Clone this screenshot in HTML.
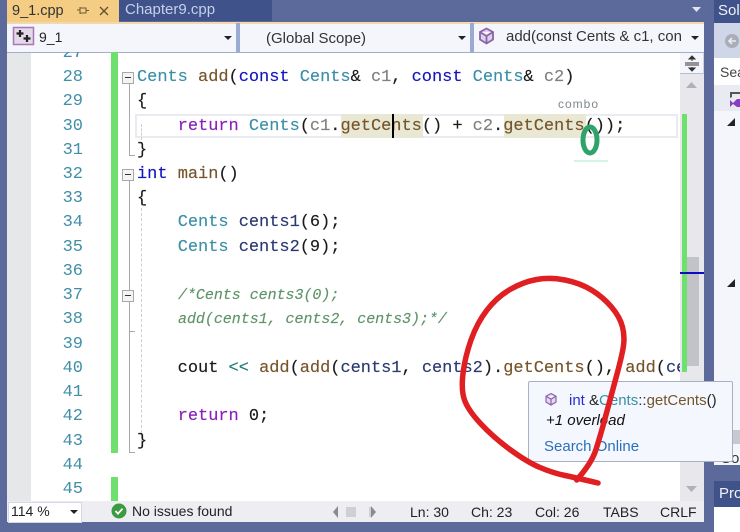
<!DOCTYPE html>
<html><head><meta charset="utf-8">
<style>
html,body{margin:0;padding:0;}
body{width:740px;height:532px;overflow:hidden;position:relative;background:#5b6a9a;font-family:"Liberation Sans","Noto Sans CJK KR",sans-serif;}
.a{position:absolute;}
.t{position:absolute;white-space:pre;}
#ed{position:absolute;left:0;top:52px;width:680px;height:449px;overflow:hidden;}
.c{position:absolute;left:137px;height:24px;font:17px/24px "Liberation Mono",monospace;letter-spacing:-.03px;white-space:pre;color:#1a1a1a;margin-top:2px;-webkit-text-stroke:.15px;}
.n{position:absolute;left:40px;width:43px;text-align:right;font:17px/24px "Liberation Mono",monospace;color:#3f8fa8;margin-top:2px;}
.ty{color:#3b8fa6}.kw{color:#1515c0}.rt{color:#8a20b8}.fn{color:#75552a}.pm{color:#808080}.lv{color:#2a3a70}.cm{color:#5f9468;font-style:italic}.op{color:#1f7a7a}
.fold{position:absolute;left:122px;width:10px;height:10px;border:1px solid #a8a8a8;background:#f4f4f4;}
.fold:after{content:"";position:absolute;left:2px;top:4px;width:6px;height:1px;background:#333;}
.vl{position:absolute;background:#a8a8a8;}
.ui{font-size:14px;color:#222;}
.u{font-size:15px;color:#222;}
</style></head><body>
<!-- tabs -->
<div class="a" style="left:7px;top:0;width:112px;height:22px;background:#f5cc84"></div>
<div class="t" style="left:12px;top:1px;font-size:14.5px;line-height:20px;color:#333">9_1.cpp</div>
<svg class="a" style="left:76px;top:4px" width="40" height="14"><path d="M1 6h3M4 3v7M4 4h6v5H4M10 6.500h3" stroke="#6a5a30" fill="none"/><path d="M24 3l8 8M32 3l-8 8" stroke="#5c5030" stroke-width="1.300" fill="none"/></svg>
<div class="a" style="left:119px;top:0;width:153px;height:21px;background:#3f5289"></div>
<div class="t" style="left:125px;top:0;font-size:15px;line-height:20px;color:#c6d0ec">Chapter9.cpp</div>
<svg class="a" style="left:692px;top:7px" width="10" height="6"><path d="M0 0h9l-4.500 5z" fill="#dfe4f0"/></svg>
<!-- nav bar -->
<div class="a" style="left:7px;top:22px;width:697px;height:2px;background:#f2d8ad"></div>
<div class="a" style="left:7px;top:24px;width:697px;height:28px;background:#f5f6fc"></div>
<div class="a" style="left:7px;top:52px;width:697px;height:1px;background:#a3aeca"></div>
<div class="a" style="left:236px;top:23px;width:4px;height:29px;background:#9aaad0"></div>
<div class="a" style="left:470px;top:23px;width:4px;height:29px;background:#9aaad0"></div>
<svg class="a" style="left:12px;top:26px" width="24" height="21"><rect x="1.500" y="1.500" width="20" height="17" fill="#e4d8ea" stroke="#a679b5" stroke-width="1.500"/><path d="M8 4v7M4.500 7.500h7M15 9v7M11.500 12.500h7" stroke="#222" stroke-width="2.200"/></svg>
<div class="t ui" style="left:39px;top:27px;line-height:20px">9_1</div>
<svg class="a" style="left:224px;top:36px" width="9" height="5"><path d="M0 0h8l-4 4z" fill="#222"/></svg>
<div class="t u" style="left:266px;top:29px;line-height:20px;color:#333">(Global Scope)</div>
<svg class="a" style="left:458px;top:36px" width="9" height="5"><path d="M0 0h8l-4 4z" fill="#222"/></svg>
<svg class="a" style="left:478px;top:27px" width="17" height="18"><path d="M8.500 1.500l6.500 3.500v7.500l-6.500 4-6.500-4V5zM2 5l6.500 4 6.500-4M8.500 9v8" fill="#ddd2ea" stroke="#8a63aa" stroke-width="1.800"/></svg>
<div class="t u" style="left:506px;top:27px;line-height:20px;color:#333">add(const Cents &amp; c1, con</div>
<svg class="a" style="left:691px;top:36px" width="9" height="5"><path d="M0 0h8l-4 4z" fill="#222"/></svg>
<!-- editor -->
<div class="a" style="left:7px;top:53px;width:24px;height:448px;background:#e6e7e8"></div>
<div class="a" style="left:31px;top:53px;width:649px;height:448px;background:#fff"></div>
<div id="ed">
<div class="a" style="left:111px;top:0;width:7px;height:401px;background:#6ee06e"></div>
<div class="a" style="left:111px;top:425px;width:7px;height:24px;background:#6ee06e"></div>
<div class="a" style="left:135px;top:62px;width:539px;height:20px;border:2px solid #eaeaf1"></div>
<div class="a" style="left:341px;top:62px;width:82px;height:24px;background:#e8e8d4"></div>
<div class="a" style="left:504px;top:62px;width:82px;height:24px;background:#e8e8d4"></div>
<div class="vl" style="left:129px;top:31px;width:1px;height:72px"></div>
<div class="vl" style="left:129px;top:103px;width:6px;height:1px"></div>
<div class="vl" style="left:129px;top:128px;width:1px;height:272px"></div>
<div class="vl" style="left:129px;top:400px;width:6px;height:1px"></div>
<div class="vl" style="left:129px;top:279px;width:6px;height:1px"></div>
<div class="a" style="left:141px;top:72px;width:0;height:16px;border-left:1px dashed #cfcfcf"></div>
<div class="a" style="left:141px;top:146px;width:0;height:250px;border-left:1px dashed #cfcfcf"></div>
<div class="fold" style="top:20px"></div>
<div class="fold" style="top:117px"></div>
<div class="fold" style="top:238px"></div>
<div class="n" style="top:-12px">27</div>
<div class="n" style="top:12px">28</div><div class="n" style="top:36px">29</div><div class="n" style="top:61px">30</div><div class="n" style="top:85px">31</div><div class="n" style="top:109px">32</div><div class="n" style="top:133px">33</div><div class="n" style="top:157px">34</div><div class="n" style="top:182px">35</div><div class="n" style="top:206px">36</div><div class="n" style="top:230px">37</div><div class="n" style="top:254px">38</div><div class="n" style="top:279px">39</div><div class="n" style="top:303px">40</div><div class="n" style="top:327px">41</div><div class="n" style="top:351px">42</div><div class="n" style="top:376px">43</div><div class="n" style="top:400px">44</div><div class="n" style="top:424px">45</div>
<div class="c" style="top:12px"><span class="ty">Cents</span> <span class="fn">add</span>(<span class="kw">const</span> <span class="ty">Cents</span>&amp; <span class="pm">c1</span>, <span class="kw">const</span> <span class="ty">Cents</span>&amp; <span class="pm">c2</span>)</div>
<div class="c" style="top:36px">{</div>
<div class="c" style="top:61px">    <span class="rt">return</span> <span class="ty">Cents</span>(<span class="pm">c1</span>.<span class="fn">getCents</span>() + <span class="pm">c2</span>.<span class="fn">getCents</span>());</div>
<div class="c" style="top:85px">}</div>
<div class="c" style="top:109px"><span class="kw">int</span> <span class="fn">main</span>()</div>
<div class="c" style="top:133px">{</div>
<div class="c" style="top:157px">    <span class="ty">Cents</span> <span class="lv">cents1</span>(6);</div>
<div class="c" style="top:182px">    <span class="ty">Cents</span> <span class="lv">cents2</span>(9);</div>
<div class="c" style="top:230px;left:178px;font-size:15px;letter-spacing:-.04px"><span class="cm">/*Cents cents3(0);</span></div>
<div class="c" style="top:254px;left:178px;font-size:15px;letter-spacing:-.04px"><span class="cm">add(cents1, cents2, cents3);*/</span></div>
<div class="c" style="top:303px">    cout <span class="op">&lt;&lt;</span> <span class="fn">add</span>(<span class="fn">add</span>(<span class="lv">cents1</span>, <span class="lv">cents2</span>).<span class="fn">getCents</span>(), <span class="fn">add</span>(<span class="lv">ce</span></div>
<div class="c" style="top:351px">    <span class="rt">return</span> 0;</div>
<div class="c" style="top:376px">}</div>
<div class="a" style="left:392px;top:62px;width:2px;height:24px;background:#000"></div>
</div>
<!-- annotation near line 30 -->
<div class="t" style="left:558px;top:98px;font-size:12px;line-height:13px;color:#7f888c;letter-spacing:1px">combo</div>
<svg class="a" style="left:572px;top:120px" width="38" height="44"><ellipse cx="18" cy="20" rx="7" ry="13" fill="none" stroke="#2ea36a" stroke-width="5"/><path d="M2 41h34" stroke="#a6ecc8" stroke-width="1"/></svg>
<!-- splitter + scrollbar -->
<div class="a" style="left:680px;top:53px;width:24px;height:448px;background:#e8e8ec"></div>
<div class="a" style="left:680px;top:53px;width:23px;height:20px;background:#f5f6fc;border-right:1px solid #cfd3e2;border-bottom:1px solid #b7c0da"></div>
<svg class="a" style="left:684px;top:55px" width="16" height="17"><path d="M1 8h14M1 10h14" stroke="#333" stroke-width="1"/><path d="M8 1l-3 3h6zM8 16l-3-3h6zM8 3v3M8 12v3" fill="#333" stroke="#333" stroke-width="1"/></svg>
<svg class="a" style="left:686px;top:81px" width="12" height="8"><path d="M0 7l5.500-6 5.500 6z" fill="#b0b0b8"/></svg>
<svg class="a" style="left:686px;top:485px" width="12" height="8"><path d="M0 1l5.500 6 5.500-6z" fill="#b0b0b8"/></svg>
<div class="a" style="left:682px;top:114px;width:5px;height:258px;background:#6ee06e"></div>
<div class="a" style="left:687px;top:257px;width:12px;height:109px;background:#c2c3c9"></div>
<div class="a" style="left:680px;top:272px;width:24px;height:2px;background:#0b0bc4"></div>
<!-- status bar -->
<div class="a" style="left:7px;top:501px;width:697px;height:21px;background:#eeeef2"></div>
<div class="a" style="left:8px;top:502px;width:72px;height:19px;background:#fff;border:1px solid #d4d8e6"></div>
<div class="t ui" style="left:11px;top:502px;line-height:19px">114 %</div>
<svg class="a" style="left:70px;top:510px" width="9" height="5"><path d="M0 0h8l-4 4z" fill="#222"/></svg>
<svg class="a" style="left:111px;top:503px" width="16" height="16"><circle cx="8" cy="8" r="7.500" fill="#3c9a42"/><path d="M4.500 8l2.500 2.700 4.500-5" stroke="#fff" stroke-width="1.800" fill="none"/></svg>
<div class="t ui" style="left:132px;top:502px;line-height:19px">No issues found</div>
<svg class="a" style="left:332px;top:505px" width="44" height="14"><path d="M6 1v12L1 7z" fill="#8a8a92"/><rect x="14" y="2" width="10" height="10" fill="#cfcfd6"/><rect x="37" y="2" width="2" height="10" fill="#cfcfd6"/><path d="M39 1v12l5-6z" fill="#8a8a92"/></svg>
<div class="t ui" style="left:410px;top:503px;line-height:19px">Ln: 30</div>
<div class="t ui" style="left:471px;top:503px;line-height:19px">Ch: 23</div>
<div class="t ui" style="left:535px;top:503px;line-height:19px">Col: 26</div>
<div class="t ui" style="left:603px;top:503px;line-height:19px">TABS</div>
<div class="t ui" style="left:660px;top:503px;line-height:19px">CRLF</div>
<!-- right panel -->
<div class="a" style="left:714px;top:0;width:26px;height:23px;background:#3f5289"></div>
<div class="t" style="left:718px;top:1px;font-size:15px;line-height:20px;color:#f0f2f8">Sol</div>
<div class="a" style="left:714px;top:23px;width:26px;height:35px;background:#cfd6e8"></div>
<svg class="a" style="left:724px;top:33px" width="16" height="16"><circle cx="8" cy="8" r="7" fill="#a9adb8"/><path d="M12 8H5M8 5L5 8l3 3" stroke="#e8ebf2" stroke-width="1.600" fill="none"/></svg>
<div class="a" style="left:714px;top:58px;width:26px;height:27px;background:#fff"></div>
<div class="t ui" style="left:720px;top:62px;line-height:20px;color:#444">Sea</div>
<div class="a" style="left:714px;top:85px;width:26px;height:380px;background:#f5f6fc"></div>
<div class="a" style="left:714px;top:85px;width:26px;height:26px;background:#e9ebf3"></div>
<svg class="a" style="left:729px;top:90px" width="11" height="20"><path d="M1 8V2h10v2H3v3" fill="#555"/><path d="M1 10l3 3 4-4h3v8H8l-4-3-3 3z" fill="#8a3fc0"/></svg>
<svg class="a" style="left:727px;top:118px" width="9" height="9"><path d="M8 0v8H0z" fill="#222"/></svg>
<svg class="a" style="left:727px;top:279px" width="9" height="9"><path d="M8 0v8H0z" fill="#222"/></svg>
<div class="a" style="left:733px;top:430px;width:7px;height:14px;background:#c8c8d0"></div>
<div class="t ui" style="left:721px;top:450px;line-height:18px;font-size:15px;color:#333">Sol</div>
<div class="a" style="left:714px;top:465px;width:26px;height:16px;background:#5b6a9a"></div>
<div class="a" style="left:714px;top:481px;width:26px;height:26px;background:#3f5289"></div>
<div class="t" style="left:719px;top:484px;font-size:15px;line-height:20px;color:#f0f2f8">Pro</div>
<div class="a" style="left:714px;top:507px;width:26px;height:25px;background:#fff"></div>
<!-- tooltip -->
<div class="a" style="left:528px;top:381px;width:203px;height:79px;background:#f5f7fe;border:1px solid #a9b0c6;border-radius:2px"></div>
<svg class="a" style="left:544px;top:392px" width="14" height="15"><path d="M7 1.500l5 2.700v5.800l-5 3-5-3V4.200zM2 4.200l5 3 5-3M7 7.200v6" fill="#e4daf0" stroke="#8a63aa" stroke-width="1.200"/></svg>
<div class="t u" style="left:569px;top:391px;line-height:20px"><span style="color:#2a2ad0">int</span> <span style="color:#222">&amp;</span><span style="color:#3b8fa6">Cents</span><span style="color:#333">::</span><span style="color:#75552a">getCents</span><span style="color:#222">()</span></div>
<div class="t u" style="left:546px;top:411px;line-height:20px;font-style:italic;color:#111">+1 overload</div>
<div class="t u" style="left:544px;top:437px;line-height:20px;color:#2a70b8">Search Online</div>
<!-- red scribble -->
<svg class="a" style="left:0;top:0" width="740" height="532"><path d="M576.700,480 Q591.700,463 595.800,450 Q600,437 605,418.500 Q610,400 615.800,378.500 Q621.700,357 623.300,347 Q625,337 622.500,327 Q620,317 611.500,307 Q603,297 591.500,290 Q580,283 565,280 Q550,277 536.500,279.500 Q523,282 510,289.500 Q497,297 487,310 Q477,323 471,340 Q465,357 463,373.500 Q461,390 464.500,400 Q468,410 480.500,423.500 Q493,437 510,449.500 Q527,462 540,467.500 Q553,473 565,475.500 Q577,478 598,483" fill="none" stroke="#e01f22" stroke-width="5.500" stroke-linecap="round" stroke-linejoin="round"/></svg>
</body></html>
